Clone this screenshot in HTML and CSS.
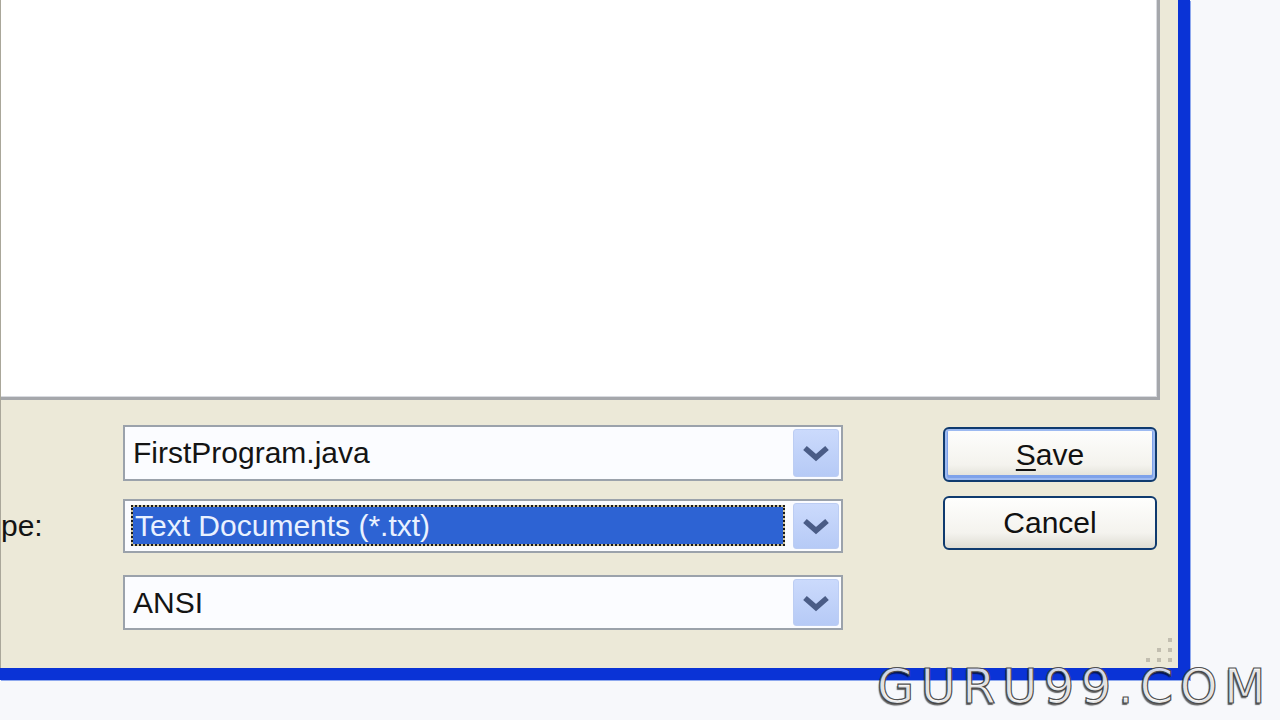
FILE: index.html
```html
<!DOCTYPE html>
<html lang="en">
<head>
<meta charset="utf-8">
<title>Save As</title>
<link rel="stylesheet" href="styles.css">
</head>
<body>
<div class="window">
  <div class="body">
    <div class="list"></div>
    <div class="form">
      <div class="combo r1">
        <span class="value">FirstProgram.java</span>
        <span class="drop"><svg width="30" height="18" viewBox="0 0 30 18"><path d="M4 4 L15 13.5 L26 4" fill="none" stroke="#4a5c86" stroke-width="5.5"/></svg></span>
      </div>
      <div class="label r2">pe:</div>
      <div class="combo r2">
        <span class="sel">Text Documents (*.txt)</span>
        <span class="drop"><svg width="30" height="18" viewBox="0 0 30 18"><path d="M4 4 L15 13.5 L26 4" fill="none" stroke="#4a5c86" stroke-width="5.5"/></svg></span>
      </div>
      <div class="combo r3">
        <span class="value">ANSI</span>
        <span class="drop"><svg width="30" height="18" viewBox="0 0 30 18"><path d="M4 4 L15 13.5 L26 4" fill="none" stroke="#4a5c86" stroke-width="5.5"/></svg></span>
      </div>
      <div class="buttons">
        <button class="btn default"><u>S</u>ave</button>
        <button class="btn">Cancel</button>
      </div>
    </div>
  </div>
  <svg class="grip" width="30" height="28" viewBox="0 0 30 28">
    <rect x="23" y="0" width="4" height="4" fill="#c2beb0"/>
    <rect x="12" y="10" width="4" height="4" fill="#c2beb0"/>
    <rect x="23" y="10" width="4" height="4" fill="#c2beb0"/>
    <rect x="1" y="20" width="4" height="4" fill="#c2beb0"/>
    <rect x="12" y="20" width="4" height="4" fill="#c2beb0"/>
    <rect x="23" y="20" width="4" height="4" fill="#c2beb0"/>
  </svg>
</div>
<div class="watermark">GURU99.COM</div>
</body>
</html>
```

FILE: styles.css
```css
html, body {
  margin: 0;
  padding: 0;
  width: 1280px;
  height: 720px;
  overflow: hidden;
  background: #f7f8fb;
  font-family: "Liberation Sans", Arial, sans-serif;
}

.window {
  position: relative;
  width: 1190px;
  height: 680px;
  box-sizing: border-box;
  background: #ece9d8;
  border-right: 12px solid #0a33d6;
  border-bottom: 12px solid #0a33d6;
  box-shadow: 1px 1px 0 #8ea8ee;
  overflow: hidden;
}

.body {
  height: 100%;
  border-left: 1px solid #aaa79a;
  box-sizing: border-box;
  display: flex;
  flex-direction: column;
}

.list {
  width: 1159px;
  height: 400px;
  box-sizing: border-box;
  background: #ffffff;
  border-right: 3px solid #a5a7ab;
  border-bottom: 3px solid #a5a7ab;
  box-shadow: inset -1px -1px 0 #d9dbe0;
  flex: none;
}

.form {
  display: grid;
  grid-template-columns: 122px 720px 100px 214px;
  grid-template-rows: 56px 54px 59px;
  row-gap: 18px;
  padding-top: 25px;
}

.combo {
  grid-column: 2;
  box-sizing: border-box;
  border: 2px solid #9ba2ab;
  background: #fbfcff;
  display: flex;
  align-items: stretch;
  padding: 2px;
  font-size: 30px;
  color: #141414;
}

.combo.r1 { grid-row: 1; }
.combo.r2 { grid-row: 2; }
.combo.r3 { grid-row: 3; height: 55px; align-self: end; }

.value {
  flex: 1;
  display: flex;
  align-items: center;
  padding-left: 6px;
}

.sel {
  flex: 1;
  display: flex;
  align-items: center;
  margin: 2px 8px 3px 4px;
  padding-left: 2px;
  border: 2px dotted #1a1a1a;
  background: linear-gradient(#2d63d3, #2d63d3) padding-box, #cdc39d border-box;
  color: #e9f1ff;
  font-size: 30px;
}

.drop {
  width: 46px;
  flex: none;
  display: flex;
  align-items: center;
  justify-content: center;
  box-sizing: border-box;
  border: 1px solid #bccdf3;
  border-radius: 3px;
  background: linear-gradient(#cbdafc, #b6caf6);
}

.label {
  grid-column: 1;
  grid-row: 2;
  align-self: center;
  font-size: 30px;
  color: #141414;
  white-space: nowrap;
}

.buttons {
  grid-column: 4;
  grid-row: 1 / 3;
  margin-top: 2px;
  display: flex;
  flex-direction: column;
  gap: 14px;
}

.btn {
  box-sizing: border-box;
  height: 54px;
  border: 2px solid #0f3a6e;
  border-radius: 6px;
  background: linear-gradient(#fefefd, #f4f3ee 70%, #dedcd3);
  font-family: "Liberation Sans", Arial, sans-serif;
  font-size: 30px;
  color: #111;
  padding: 0;
}

.btn.default {
  height: 55px;
  box-shadow: inset 0 0 0 2px #9dbaf1, inset 0 -2px 0 3px #7ea2ea;
}

.btn u {
  text-decoration-thickness: 2px;
  text-underline-offset: 4px;
}

.grip {
  position: absolute;
  left: 1145px;
  top: 638px;
}

.watermark {
  position: absolute;
  left: 877px;
  top: 662px;
  font-family: "DejaVu Sans", sans-serif;
  font-size: 48px;
  line-height: 48px;
  letter-spacing: 6.5px;
  color: rgba(250, 250, 250, 0.85);
  -webkit-text-stroke: 1.2px rgba(60, 60, 60, 0.9);
  text-shadow: -1px 2px 1px rgba(0, 0, 0, 0.6);
  white-space: nowrap;
}
```
